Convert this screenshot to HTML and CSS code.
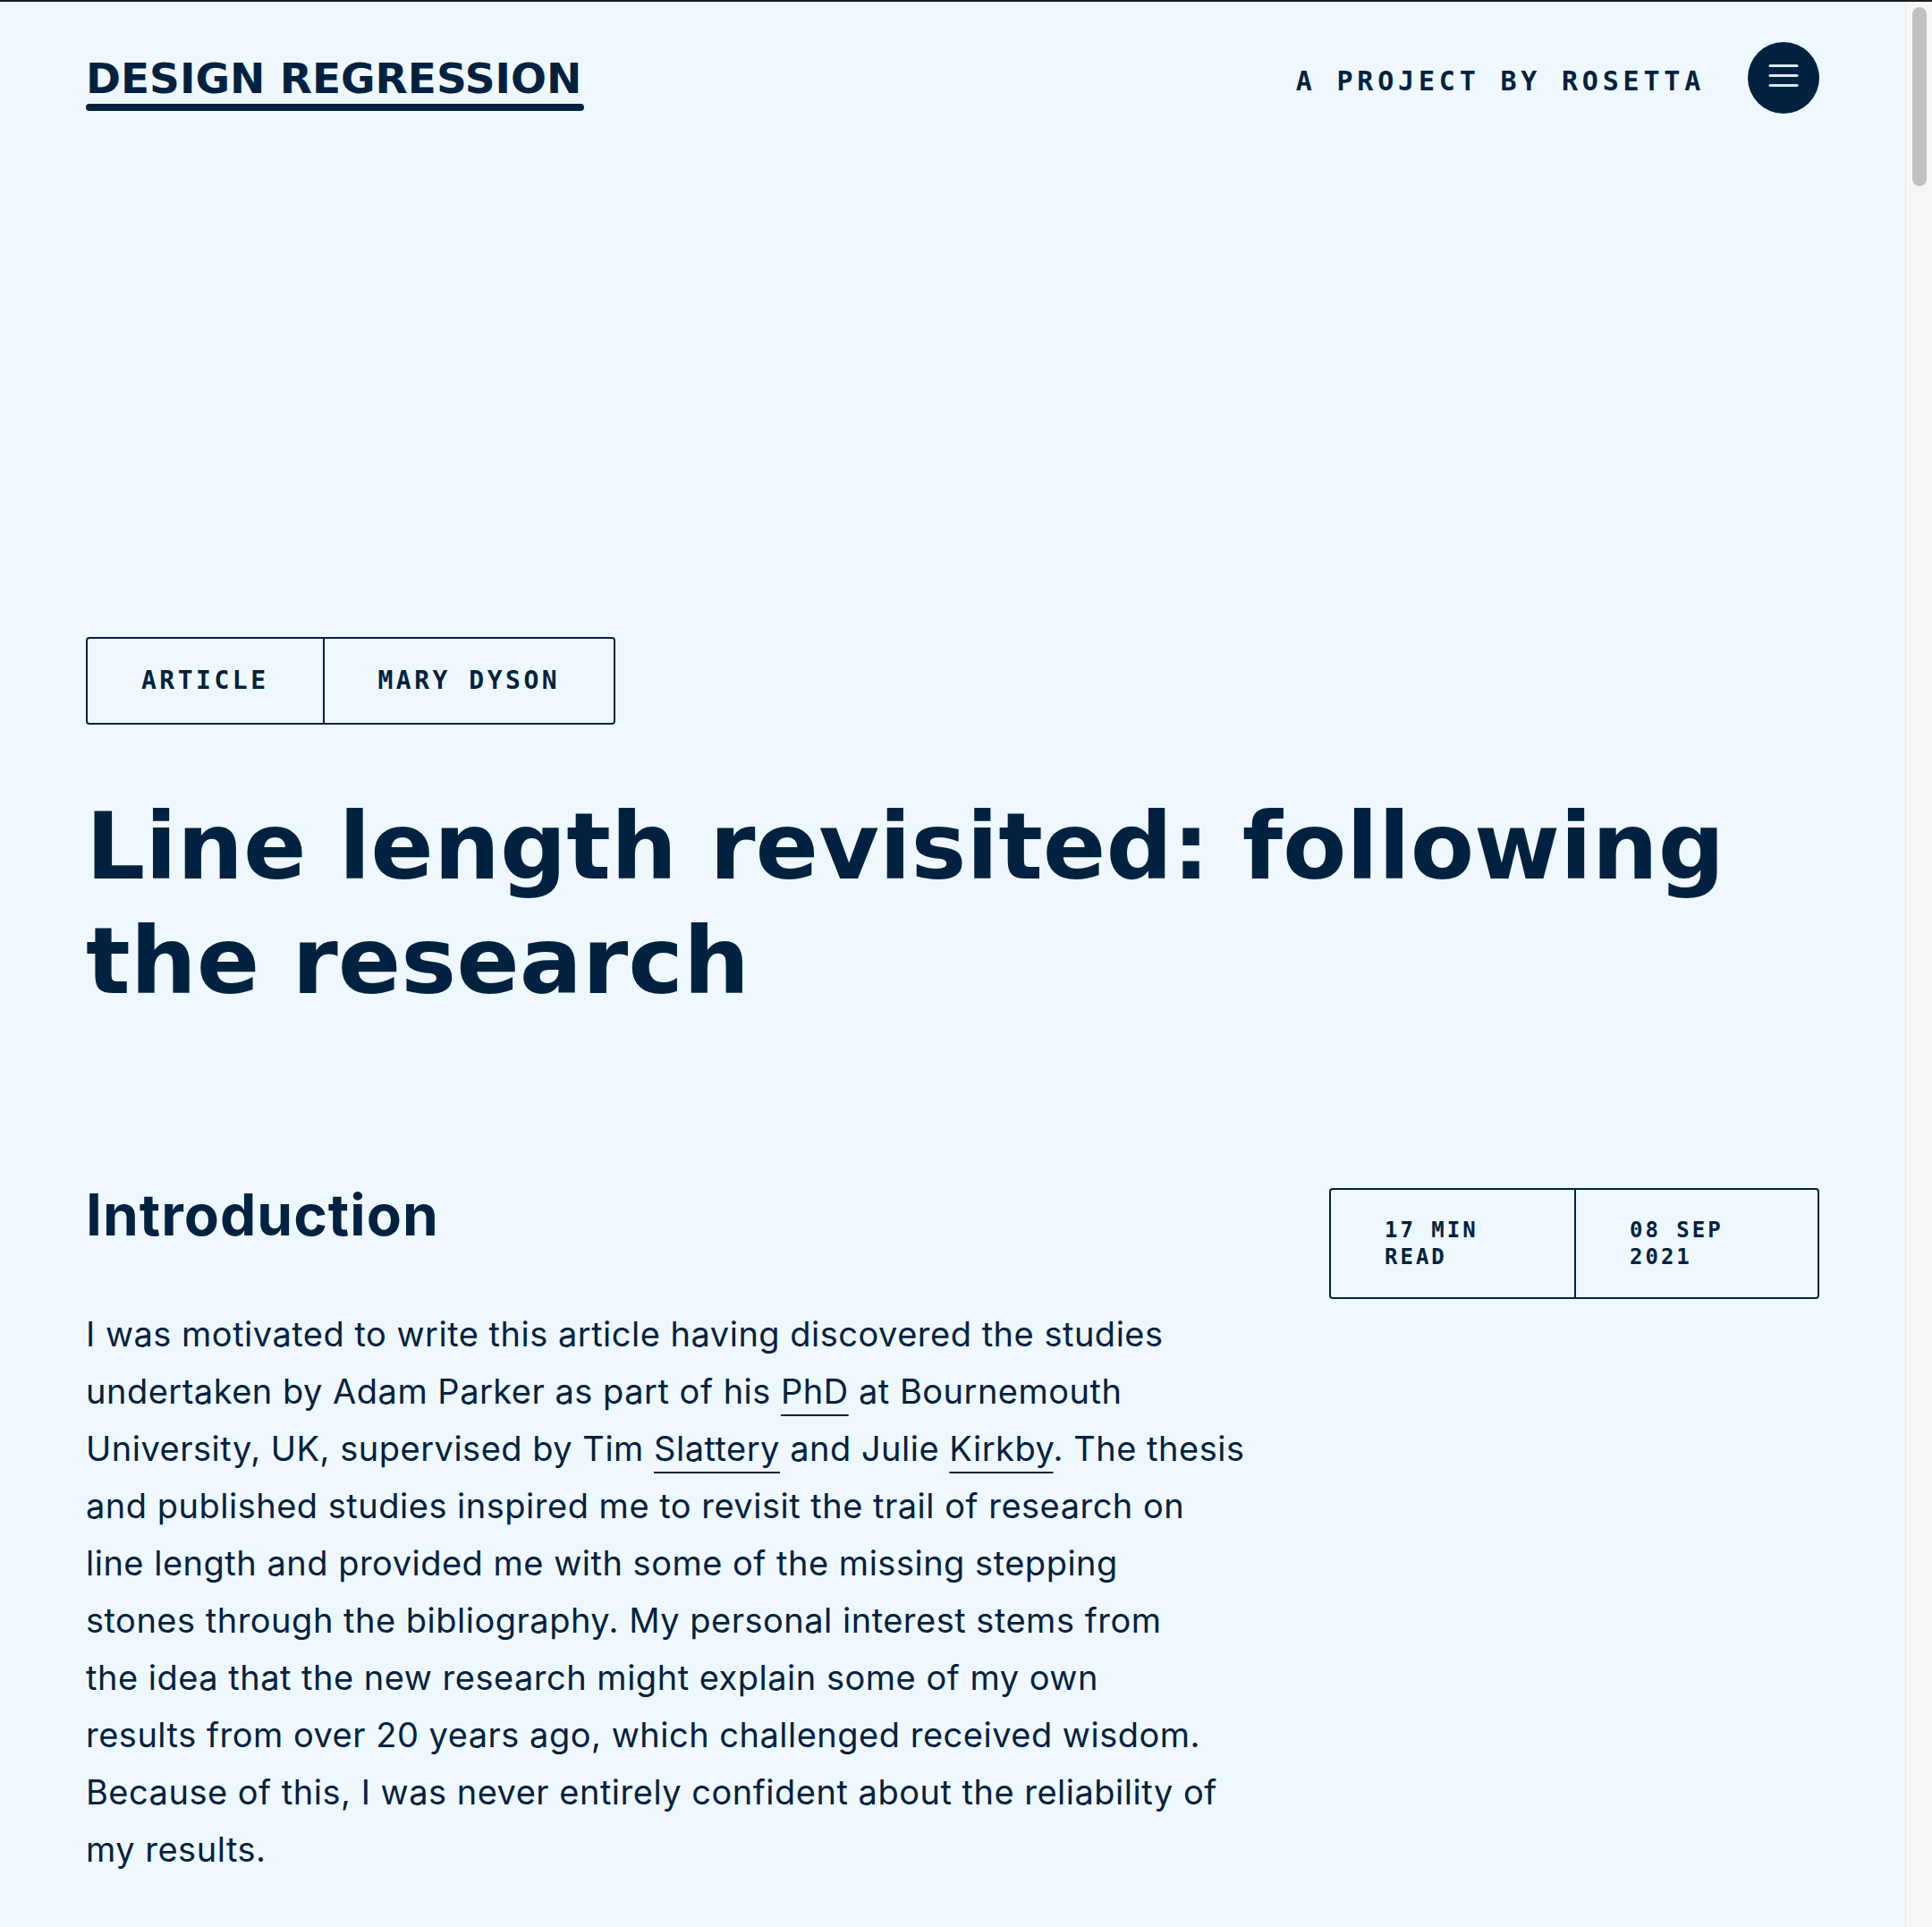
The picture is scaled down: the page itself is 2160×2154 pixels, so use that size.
FILE: index.html
```html
<!DOCTYPE html>
<html lang="en">
<head>
<meta charset="utf-8">
<title>Line length revisited: following the research — Design Regression</title>
<link rel="stylesheet" href="styles.css">
</head>
<body>
<div class="page">
  <header class="site-header">
    <a class="logo" href="#">DESIGN REGRESSION</a>
    <div class="header-right">
      <span class="byline">A PROJECT BY ROSETTA</span>
      <button class="menu-btn" aria-label="Menu">
        <svg class="menu-icon" viewBox="0 0 80 80" width="80" height="80" aria-hidden="true">
          <line x1="25" y1="26.5" x2="55" y2="26.5"/>
          <line x1="25" y1="37.5" x2="55" y2="37.5"/>
          <line x1="25" y1="48.5" x2="55" y2="48.5"/>
        </svg>
      </button>
    </div>
  </header>

  <main class="article">
    <div class="tags">
      <span class="tag">ARTICLE</span>
      <span class="tag">MARY DYSON</span>
    </div>
    <h1 class="title">Line length revisited: following the research</h1>

    <div class="article-body">
      <div class="content">
        <h2 class="section-title">Introduction</h2>
        <p class="text">I was motivated to write this article having discovered the studies<br>
undertaken by Adam Parker as part of his <a href="#">PhD</a> at Bournemouth<br>
University, UK, supervised by Tim <a href="#">Slattery</a> and Julie <a href="#">Kirkby</a>. The thesis<br>
and published studies inspired me to revisit the trail of research on<br>
line length and provided me with some of the missing stepping<br>
stones through the bibliography. My personal interest stems from<br>
the idea that the new research might explain some of my own<br>
results from over 20 years ago, which challenged received wisdom.<br>
Because of this, I was never entirely confident about the reliability of<br>
my results.</p>
      </div>
      <aside class="meta">
        <div class="meta-cell">17 MIN READ</div>
        <div class="meta-cell">08 SEP 2021</div>
      </aside>
    </div>
  </main>
</div>

<div class="scrollbar" aria-hidden="true"><div class="scrollbar-thumb"></div></div>
</body>
</html>
```

FILE: styles.css
```css
html, body {
  margin: 0;
  padding: 0;
}

body {
  min-height: 100vh;
  box-sizing: border-box;
  border-top: 2px solid #1d1d1d;
  background: #f0f8ff;
  color: #002240;
  font-family: "Inter", "Roboto", "Liberation Sans", sans-serif;
}

.page {
  margin-right: 30px;
  padding: 45px 96px 0;
}

/* fake window scrollbar, as in the reference capture */
.scrollbar {
  position: fixed;
  top: 2px;
  right: 0;
  bottom: 0;
  width: 29px;
  background: #f6f6f6;
  border-left: 1px solid #e6e6e6;
}

.scrollbar-thumb {
  position: absolute;
  top: 6px;
  left: 7px;
  width: 16px;
  height: 200px;
  border-radius: 8px;
  background: #c1c1c1;
}

/* Header */
.site-header {
  display: flex;
  justify-content: space-between;
  align-items: flex-start;
}

.logo {
  display: inline-block;
  margin-top: 17px;
  font-family: "DejaVu Sans", "Liberation Sans", sans-serif;
  font-weight: 700;
  font-size: 47px;
  line-height: 48px;
  color: #002240;
  text-decoration: none;
}

.logo::after {
  content: "";
  display: block;
  height: 8px;
  margin-top: 4px;
  margin-right: -3px;
  border-radius: 4px;
  background: #002240;
}

.header-right {
  display: flex;
  align-items: flex-start;
  gap: 48px;
}

.byline {
  margin-top: 29px;
  font-family: "DejaVu Sans Mono", "Liberation Mono", monospace;
  font-weight: 700;
  font-size: 30px;
  line-height: 30px;
  letter-spacing: 4.8px;
}

.menu-btn {
  width: 80px;
  height: 80px;
  padding: 0;
  border: 0;
  border-radius: 50%;
  background: #002240;
  display: flex;
  align-items: center;
  justify-content: center;
  cursor: pointer;
}

.menu-icon line {
  stroke: #dbe8f4;
  stroke-width: 3;
  stroke-linecap: round;
}

/* Article */
.tags {
  display: inline-flex;
  margin-top: 585px;
  border: 2px solid #002240;
  border-radius: 4px;
}

.tag {
  padding: 30px 60px;
  font-family: "DejaVu Sans Mono", "Liberation Mono", monospace;
  font-weight: 700;
  font-size: 28px;
  line-height: 34px;
  letter-spacing: 3.5px;
}

.tag + .tag {
  border-left: 2px solid #002240;
}

.title {
  margin: 72px 0 0;
  font-family: "DejaVu Sans", "Liberation Sans", sans-serif;
  font-weight: 700;
  font-size: 104px;
  line-height: 128px;
}

.article-body {
  display: grid;
  grid-template-columns: minmax(0, 1fr) 548px;
  column-gap: 60px;
  align-items: start;
  margin-top: 180px;
}

.section-title {
  margin: 0;
  font-weight: 700;
  font-size: 64px;
  line-height: 79px;
  letter-spacing: 1px;
}

.text {
  margin: 62px 0 0;
  font-size: 38px;
  line-height: 64px;
  letter-spacing: 0.5px;
  white-space: nowrap;
}

.text a {
  color: inherit;
  text-decoration: underline;
  text-decoration-thickness: 2px;
  text-underline-offset: 12px;
}

.meta {
  display: grid;
  grid-template-columns: 1fr 1fr;
  margin-top: 10px;
  border: 2px solid #002240;
  border-radius: 4px;
}

.meta-cell {
  padding: 30px 60px;
  font-family: "DejaVu Sans Mono", "Liberation Mono", monospace;
  font-weight: 700;
  font-size: 24px;
  line-height: 30px;
  letter-spacing: 3px;
}

.meta-cell + .meta-cell {
  border-left: 2px solid #002240;
}
```
